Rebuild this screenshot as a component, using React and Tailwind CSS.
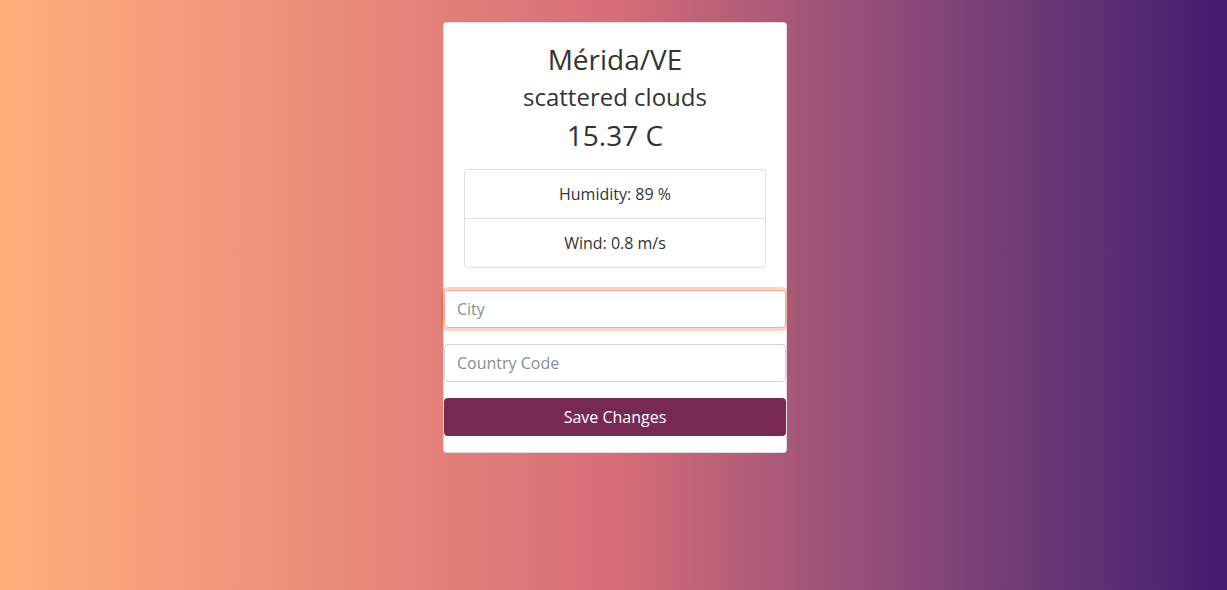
import React from 'react';

const App = () => {
  return (
    <div
      className="min-h-screen w-full bg-gradient-to-r from-[#ffaf7b] via-[#d76d77] to-[#421a6f] pt-[22px] pl-[3px] font-['Open_Sans',_'Noto_Sans',_sans-serif]"
    >
      <div className="mx-auto w-[344px] bg-white border border-black/[0.125] rounded text-[#333]">
        <div className="px-5 pt-5 pb-[22px] text-center">
          <h3 className="text-[28px] leading-[1.2] mb-[6px]">Mérida/VE</h3>
          <h4 className="text-[24px] leading-[1.2] mb-2">scattered clouds</h4>
          <h3 className="text-[28px] leading-[1.2] mb-4">15.37 C</h3>
          <ul className="border border-black/[0.125] rounded text-[16px] leading-6">
            <li className="py-3 px-5">Humidity: 89 %</li>
            <li className="py-3 px-5 border-t border-black/[0.125]">Wind: 0.8 m/s</li>
          </ul>
        </div>
        <form className="pb-4" onSubmit={(e) => e.preventDefault()}>
          <input
            type="text"
            placeholder="City"
            autoFocus
            className="block w-full h-[38px] px-3 mb-4 text-[16px] text-[#495057] bg-white border border-[#f4ad94] rounded outline-none shadow-[0_0_0_3px_rgba(233,84,32,0.25)] placeholder:text-[#868e96]"
          />
          <input
            type="text"
            placeholder="Country Code"
            className="block w-full h-[38px] px-3 mb-4 text-[16px] text-[#495057] bg-white border border-[#ced4da] rounded outline-none placeholder:text-[#868e96]"
          />
          <button
            type="submit"
            className="block w-full h-[38px] text-[16px] text-white bg-[#772953] rounded"
          >
            Save Changes
          </button>
        </form>
      </div>
    </div>
  );
};

export default App;
